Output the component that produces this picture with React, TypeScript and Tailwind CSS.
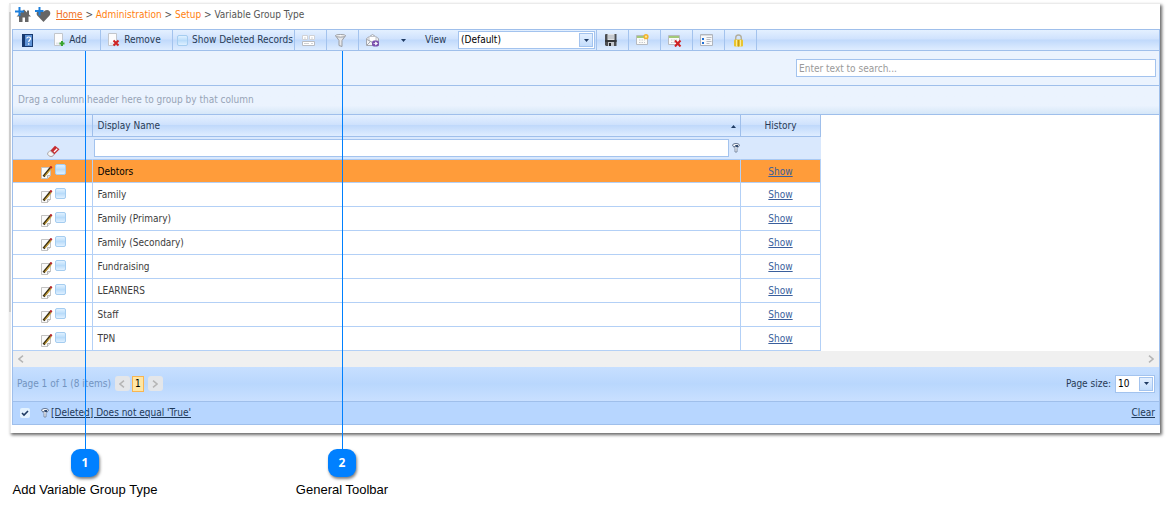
import React, { ReactNode, useState } from 'react';

const groupTypes = [
  'Debtors',
  'Family',
  'Family (Primary)',
  'Family (Secondary)',
  'Fundraising',
  'LEARNERS',
  'Staff',
  'TPN',
];

const barGradient =
  'bg-[linear-gradient(#e4f0ff,#cfe2fd_45%,#c0d9fb_50%,#dfedff)]';

const AddHomeIcon = () => (
  <svg width="16" height="16" viewBox="0 0 16 16" className="shrink-0">
    <path d="M9 2.500 1.500 9.500H4V15h3.500v-4.500h2.500V15h3.500V9.500H16l-2-2V3.500h-2v2z" fill="#666" />
    <path d="M4.500 0v9M0 4.500h9" stroke="#1c7fdc" strokeWidth="2" />
  </svg>
);

const AddHeartIcon = () => (
  <svg width="16" height="16" viewBox="0 0 16 16" className="shrink-0">
    <path
      d="M8.500 15 2.200 8.500C.8 6.500 2 3 5 3c1.800 0 2.900.8 3.500 2C9.200 3.800 10.400 3 12 3c3 0 4.200 3.300 2.600 5.500z"
      fill="#666"
    />
    <path d="M4.500 0v8.500M0 4h8.500" stroke="#1c7fdc" strokeWidth="2" />
  </svg>
);

const HelpIcon = () => (
  <svg width="11" height="13" viewBox="0 0 11 13">
    <path d="M0 0h11v13H0z" fill="#17396f" />
    <path d="M3 1h7v11H3z" fill="#5f93d6" />
    <path d="M4.800 4.500c0-2 3.700-2 3.700 0C8.500 6 6.700 6 6.700 8M6.700 9.200v1.500" stroke="#fff" strokeWidth="1.200" fill="none" />
  </svg>
);

const PageShape = () => (
  <>
    <path d="M.5.5h8v12h-8z" fill="#fcfcfd" stroke="#c2c6cc" />
    <path d="M2 10.500h6" stroke="#e3e6ea" strokeWidth="2" />
  </>
);

const AddPageIcon = () => (
  <svg width="11" height="14" viewBox="0 0 11 14">
    <PageShape />
    <path d="M8 8v5M5.500 10.500h5" stroke="#3aa32f" strokeWidth="2" />
  </svg>
);

const RemovePageIcon = () => (
  <svg width="12" height="14" viewBox="0 0 12 14">
    <PageShape />
    <path d="m5.500 7.500 5 5M10.500 7.500l-5 5" stroke="#cf2222" strokeWidth="2" />
  </svg>
);

const CardsIcon = () => (
  <svg width="13" height="11" viewBox="0 0 13 11">
    <path d="M.5.5h5v4h-5zM7.500.5h5v4h-5z" fill="#fff" stroke="#d0d2d6" />
    <path d="M.5 6.500h12v4H.5z" fill="#fff" stroke="#b9bcc2" />
    <path d="M2 3h2M9 3h2M2 8.500h5M9 8.500h2" stroke="#d0d2d6" />
  </svg>
);

const FunnelIcon = () => (
  <svg width="11" height="13" viewBox="0 0 11 13">
    <path d="M.5 1.500 4 6.500v5l3 1v-6l3.500-5z" fill="#e6e8eb" stroke="#9a9da3" />
    <ellipse cx="5.500" cy="1.800" rx="5" ry="1.300" fill="#fafafa" stroke="#9a9da3" />
  </svg>
);

const ExportIcon = () => (
  <svg width="14" height="13" viewBox="0 0 14 13">
    <path d="M.5 4.500 6.500.5l6 4v7H.5z" fill="#f3f4f6" stroke="#a4a8b0" />
    <path d="M3 2.500h7v4l-3.500 2L3 6.500z" fill="#fff" stroke="#c0c3ca" />
    <path d="m1 11 4-4M1 5.500l5.500 3" stroke="#a4a8b0" />
    <rect x="6" y="6.500" width="7" height="6" rx="2" fill="#7a4fae" />
    <path d="M7.500 9.500h2M9.500 8l2 1.500-2 1.500z" stroke="#fff" fill="#fff" strokeWidth=".7" />
  </svg>
);

const SaveIcon = () => (
  <svg width="12" height="12" viewBox="0 0 12 12">
    <path d="M.5 0h11v12H1l-1-1V.5z" fill="#4b4e53" />
    <path d="M2.500 0h7v6h-7z" fill="#dfe2e6" />
    <path d="M3 2h6M3 4h6" stroke="#aeb3ba" />
    <path d="M0 6.500h12v1H0z" fill="#1f2124" />
    <path d="M3 8h6v4H3z" fill="#c4c8ce" />
    <path d="M4 9h2v3H4z" fill="#26282c" />
  </svg>
);

const TableShape = () => (
  <>
    <path d="M.5 1.500h11v9H.5z" fill="#fbfbf9" stroke="#b7bac0" />
    <path d="M1 3h10" stroke="#84b84e" strokeWidth="1.500" />
    <path d="M3 6h6M3 8.500h6" stroke="#c6c9ce" strokeDasharray="1.500 1" />
  </>
);

const NewViewIcon = () => (
  <svg width="13" height="12" viewBox="0 0 13 12">
    <TableShape />
    <circle cx="10" cy="2.700" r="2.600" fill="#f2b32c" />
    <circle cx="10" cy="2.700" r="1.100" fill="#fde79a" />
  </svg>
);

const DeleteViewIcon = () => (
  <svg width="14" height="13" viewBox="0 0 14 13">
    <TableShape />
    <path d="m7 6.500 5.500 6M12.500 6.500l-5.500 6" stroke="#cf2222" strokeWidth="2" />
  </svg>
);

const FieldListIcon = () => (
  <svg width="13" height="12" viewBox="0 0 13 12">
    <path d="M.5.5h12v11H.5z" fill="#f7f8fa" stroke="#b0b5bd" />
    <path d="M1 1.500h11" stroke="#d8dbe0" />
    <path d="M2 4h2v2H2zM2 8h2v2H2z" fill="#1f6fd6" />
    <path d="M6.500 3.500h5M6.500 5.500h4M6.500 7.500h5M6.500 9.500h3" stroke="#b9bcc2" />
  </svg>
);

const LockIcon = () => (
  <svg width="9" height="13" viewBox="0 0 9 13">
    <path d="M1.700 6.500V4c0-4 5.600-4 5.600 0v2.500" stroke="#b3af9d" strokeWidth="1.400" fill="none" />
    <rect y="5.500" width="9" height="7" rx="1" fill="#e8c42f" />
    <path d="M2.500 6v6.500M6.500 6v6.500" stroke="#fbeb9a" />
    <path d="M4.500 6v6.500" stroke="#c79b1a" />
  </svg>
);

const EraserIcon = () => (
  <svg width="13" height="12" viewBox="0 0 13 12">
    <path d="M.7 8.500 8 .8l4.500 3.400-7.200 7.200H3z" fill="#c62d31" />
    <path d="m.7 8 2.300-2.500 4.200 3.700-2 2.200H3L.7 9.700z" fill="#f6f6f6" stroke="#9d9d9d" strokeWidth=".8" />
    <path d="m7 7 3.200-3.200" stroke="#fff" strokeWidth="1.300" />
  </svg>
);

const EditIcon = () => (
  <svg width="12" height="13" viewBox="0 0 12 13">
    <path d="M.5 1.500h9v8l-3 3h-6z" fill="#fafafa" stroke="#c2c2c2" />
    <path d="M6.500 12.500v-3h3" fill="#e5e5e5" stroke="#b5b5b5" />
    <path d="M2.500 10.500 9.500 2" stroke="#3a2e12" strokeWidth="2.400" />
    <path d="M3.800 10 10.200 2.300" stroke="#d6ac3a" strokeWidth="1.100" />
    <path d="m9.200 2 1.500-1.500" stroke="#b3232a" strokeWidth="2.200" />
  </svg>
);

const SmallFunnelIcon = () => (
  <svg width="8" height="10" viewBox="0 0 8 10">
    <path d="M.6 2.500 3 5.500V9h2V5.500l2.400-3z" fill="#fff" stroke="#7d8ca5" />
    <ellipse cx="4" cy="2.200" rx="3.400" ry="1.700" fill="#fff" stroke="#5f7290" />
    <path d="M3 2h3v2H4z" fill="#2f486e" />
  </svg>
);

const ArrowDown = () => (
  <svg width="5" height="3" viewBox="0 0 5 3">
    <path d="M0 0h5L2.500 3z" fill="#1f3b63" />
  </svg>
);

const Chevron = ({ right = false }: { right?: boolean }) => (
  <svg width="6" height="8" viewBox="0 0 6 8">
    <path
      d={right ? 'm1 .7 4 3.300-4 3.300' : 'M5 .7 1 4l4 3.300'}
      fill="none"
      stroke="#b5b5b5"
      strokeWidth="1.500"
    />
  </svg>
);

interface ToolButtonProps {
  label: string;
  className?: string;
  children: ReactNode;
}

const ToolButton = ({ label, className = 'w-8 pr-1', children }: ToolButtonProps) => (
  <button
    aria-label={label}
    className={`flex h-full shrink-0 items-center justify-center border-r border-[#a3c3ee] ${className}`}
  >
    {children}
  </button>
);

const softCheckbox =
  'size-[11px] shrink-0 appearance-none rounded-[2px] border border-[#a5cdf0] bg-linear-to-b from-[#e0f1ff] via-[#b9dcfa] to-[#dff0ff]';

interface DropDownProps {
  label: string;
  value: string;
  className: string;
}

const DropDown = ({ label, value, className }: DropDownProps) => (
  <div className={`grid h-[18px] border border-[#a3c3ee] bg-white p-px ${className}`}>
    <select
      aria-label={label}
      className="col-start-1 row-start-1 appearance-none bg-transparent px-px text-black"
    >
      <option>{value}</option>
    </select>
    <span className="pointer-events-none col-start-1 row-start-1 flex w-[14px] items-center justify-center justify-self-end border border-[#a3c3ee] bg-linear-to-b from-[#e3efff] to-[#c4ddfc]">
      <ArrowDown />
    </span>
  </div>
);

interface CalloutProps {
  number: number;
  text: string;
  className: string;
}

const Callout = ({ number, text, className }: CalloutProps) => (
  <div
    className={`pointer-events-none absolute top-[51px] bottom-0 flex flex-col items-center font-['Liberation_Sans',Arial,sans-serif] ${className}`}
  >
    <span className="w-px flex-1 bg-[#0080ff]" />
    <span className="flex size-7 items-center justify-center rounded-[9px] bg-[#0080ff] font-['Open_Sans',sans-serif] text-[12px] font-bold text-white shadow-[1px_2px_3px_#00000080]">
      {number}
    </span>
    <span className="mt-[5px] text-[13px] leading-4 whitespace-nowrap text-black">{text}</span>
  </div>
);

const App = () => {
  const [filterOn, setFilterOn] = useState(true);

  return (
    <main className="relative bg-white pt-[3px] pr-[8px] pb-[65px] pl-[9px] font-['DejaVu_Sans_Condensed','DejaVu_Sans',Tahoma,sans-serif] text-[10px] leading-3 text-[#3c3c3c] before:absolute before:top-3 before:left-[9px] before:h-[300px] before:w-[2px] before:bg-[#cdcdcd]">
      <div className="border-t border-l-2 border-[#ebebeb] bg-white pb-2 pl-px shadow-[2px_2px_3px_#00000099]">
        <nav className="flex h-[25px] items-center pb-[3px] pl-[3px]">
          <AddHomeIcon />
          <span className="ml-1 flex">
            <AddHeartIcon />
          </span>
          <p className="ml-[5px] text-[#ff7f10]">
            <a href="#home" className="text-[#f07020] underline">
              Home
            </a>
            <span className="text-[#555]"> &gt; </span>
            <a href="#administration">Administration</a>
            <span className="text-[#555]"> &gt; </span>
            <a href="#setup">Setup</a>
            <span className="text-[#555]"> &gt; Variable Group Type</span>
          </p>
        </nav>

        <div className="border border-[#9fbfeb]">
          <div
            className={`flex h-[21px] items-center border-b border-[#9fbfeb] text-[#283b56] ${barGradient}`}
          >
            <button aria-label="Help" className="flex w-7 justify-center">
              <HelpIcon />
            </button>
            <ToolButton label="Add" className="w-[60px] gap-1">
              <AddPageIcon />
              Add
            </ToolButton>
            <ToolButton label="Remove" className="w-[72px] gap-1 pr-1">
              <RemovePageIcon />
              Remove
            </ToolButton>
            <label className="flex h-full w-[122px] shrink-0 items-center gap-1 border-r border-[#a3c3ee] pl-1 whitespace-nowrap">
              <input type="checkbox" className={softCheckbox} />
              Show Deleted Records
            </label>
            <ToolButton label="Card view">
              <CardsIcon />
            </ToolButton>
            <ToolButton label="Filter">
              <FunnelIcon />
            </ToolButton>
            <button aria-label="Export" className="flex w-7 justify-center">
              <ExportIcon />
            </button>
            <button aria-label="Export options" className="flex w-8 justify-center">
              <ArrowDown />
            </button>
            <span className="w-[39px] pl-[6px]">View</span>
            <DropDown label="View" value="(Default)" className="w-[137px]" />
            <span className="h-full w-[2px] border-r border-[#a3c3ee]" />
            <ToolButton label="Save view">
              <SaveIcon />
            </ToolButton>
            <ToolButton label="New view">
              <NewViewIcon />
            </ToolButton>
            <ToolButton label="Delete view">
              <DeleteViewIcon />
            </ToolButton>
            <ToolButton label="Field list">
              <FieldListIcon />
            </ToolButton>
            <ToolButton label="Lock">
              <LockIcon />
            </ToolButton>
          </div>

          <div className="flex h-[35px] items-center justify-end border-b border-[#9fbfeb] bg-[#ebf3fe] pr-[3px]">
            <input
              aria-label="Search"
              placeholder="Enter text to search..."
              className="h-[18px] w-[360px] border border-[#a3c3ee] bg-white px-[2px] placeholder:text-[#9a9a9a]"
            />
          </div>

          <div className="flex h-[29px] items-center border-b border-[#9fbfeb] bg-linear-to-b from-[#ebf3fe] from-70% to-[#d6e7f8] px-[5px] text-[#97a3b6]">
            Drag a column header here to group by that column
          </div>

          <table className="w-[808px] table-fixed border-collapse">
            <colgroup>
              <col className="w-[79px]" />
              <col />
              <col className="w-20" />
            </colgroup>
            <thead>
              <tr className={`h-[21px] text-[#283b56] ${barGradient}`}>
                <th className="border-r border-b border-[#9fbfeb]" />
                <th className="border-r border-b border-[#9fbfeb] p-0 font-normal">
                  <span className="flex items-center justify-between pt-[2px] pr-1 pl-[5px]">
                    Display Name
                    <svg width="5" height="3" viewBox="0 0 5 3">
                      <path d="M0 3h5L2.500 0z" fill="#1f3b63" />
                    </svg>
                  </span>
                </th>
                <th className="border-r border-b border-[#9fbfeb] p-0 pt-[2px] font-normal">
                  History
                </th>
              </tr>
            </thead>
            <tbody>
              <tr className="h-[23px] border-b border-[#a9c9f3] bg-[#d9e8fd]">
                <td className="p-0 pl-[2px]">
                  <button aria-label="Clear filter" className="mx-auto flex pt-[6px]">
                    <EraserIcon />
                  </button>
                </td>
                <td className="p-0">
                  <span className="flex items-center gap-[3px] pl-[2px]">
                    <input
                      aria-label="Filter display name"
                      className="h-[18px] min-w-0 flex-1 border border-[#a3c3ee] bg-white px-1"
                    />
                    <button aria-label="Filter options" className="pr-px">
                      <SmallFunnelIcon />
                    </button>
                  </span>
                </td>
                <td className="p-0" />
              </tr>
              {groupTypes.map((name, index) => (
                <tr
                  key={name}
                  className={
                    index === 0 ? 'h-[23px] bg-[#ff9c3a] text-black' : 'h-6 bg-white'
                  }
                >
                  <td className="border-r border-b border-[#b3d0f6] p-0 pt-[2px]">
                    <span className="flex justify-center gap-[2px] pl-[2px]">
                      <button aria-label={`Edit ${name}`} className="flex pt-[2px]">
                        <EditIcon />
                      </button>
                      <input
                        type="checkbox"
                        aria-label={`Select ${name}`}
                        className={softCheckbox}
                      />
                    </span>
                  </td>
                  <td className="border-r border-b border-[#b3d0f6] px-[5px] pt-[2px] pb-0">
                    {name}
                  </td>
                  <td className="border-r border-b border-[#b3d0f6] p-0 pt-[2px] text-center">
                    <a href="#history" className="text-[#3a5f9c] underline">
                      Show
                    </a>
                  </td>
                </tr>
              ))}
            </tbody>
          </table>

          <div className="flex h-4 items-center justify-between bg-[#f0f0f0] px-[5px]">
            <Chevron />
            <Chevron right />
          </div>

          <footer>
            <div className="flex h-[35px] items-center border-b border-[#9fbfeb] bg-linear-to-b from-[#c7dfff] via-[#b9d7fd] to-[#c9e0ff] px-1 text-[#7394c0]">
              Page 1 of 1 (8 items)
              <button
                aria-label="Previous page"
                className="ml-1 flex size-[15px] items-center justify-center rounded-[3px] bg-[#e4e6e9]"
              >
                <Chevron />
              </button>
              <button className="ml-[2px] h-4 w-3 border border-[#f8b552] bg-[#ffe6a4] text-black">
                1
              </button>
              <button
                aria-label="Next page"
                className="ml-1 flex size-[15px] items-center justify-center rounded-[3px] bg-[#e4e6e9]"
              >
                <Chevron right />
              </button>
              <span className="mr-1 ml-auto text-[#283b56]">Page size:</span>
              <DropDown label="Page size" value="10" className="w-10" />
            </div>
            <div className="flex h-[22px] items-center bg-[#b7d6ff] pr-1 pl-[7px] text-[#1e3959]">
              <span className="grid place-items-center">
                <input
                  type="checkbox"
                  aria-label="Filter enabled"
                  checked={filterOn}
                  onChange={(e) => setFilterOn(e.target.checked)}
                  className="col-start-1 row-start-1 size-[10px] appearance-none rounded-[2px] bg-[#e3f2ff]"
                />
                {filterOn && (
                  <svg
                    width="8"
                    height="8"
                    viewBox="0 0 8 8"
                    className="pointer-events-none col-start-1 row-start-1"
                  >
                    <path d="m1 4 2 2 4-4" fill="none" stroke="#1f3b63" strokeWidth="1.600" />
                  </svg>
                )}
              </span>
              <span className="mr-[2px] ml-[11px]">
                <SmallFunnelIcon />
              </span>
              <a href="#filter" className="underline">
                [Deleted] Does not equal 'True'
              </a>
              <a href="#clear" className="ml-auto underline">
                Clear
              </a>
            </div>
          </footer>
        </div>
      </div>

      <Callout number={1} text="Add Variable Group Type" className="left-3 w-[146px]" />
      <Callout number={2} text="General Toolbar" className="left-[294px] w-24" />
    </main>
  );
};

export default App;
